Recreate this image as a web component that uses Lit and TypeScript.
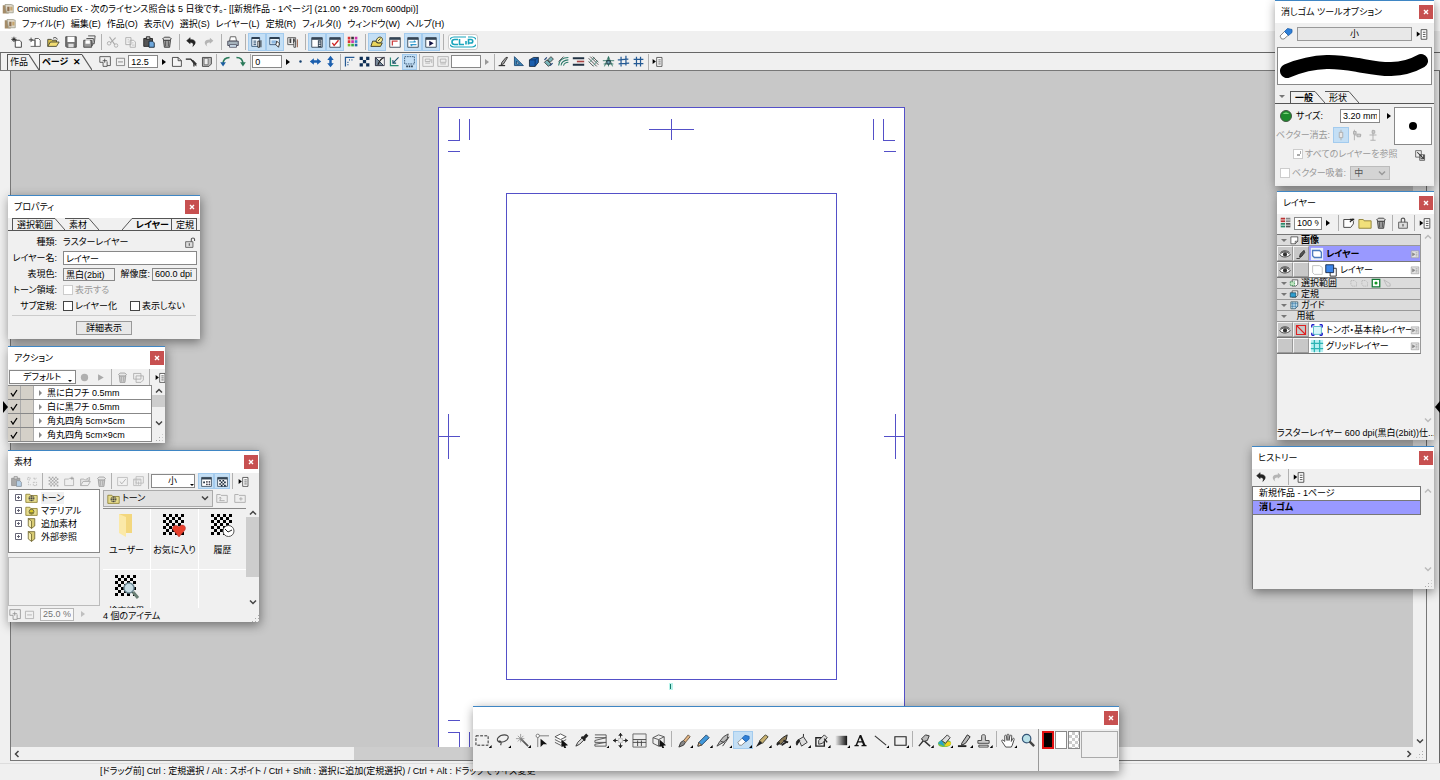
import { LitElement, html, css, svg } from "lit";
import { customElement, property } from "lit/decorators.js";
import { classMap } from "lit/directives/class-map.js";

/* Path data for an n x n checkerboard made of s-sized squares. */
const checker = (n: number, s: number, x0: number, y0: number) => {
  let d = "";
  for (let r = 0; r < n; r++)
    for (let c = 0; c < n; c++)
      if ((r + c) % 2 === 0) d += `M${x0 + c * s} ${y0 + r * s}h${s}v${s}h${-s}z`;
  return d;
};

const trash = svg`<path d="M4 6h8l-1 8H5z" fill="#aaa" stroke="#333"/><path d="M3 4.5 5 2.5h6l2 2-2 1.5H5z" fill="#ddd" stroke="#333"/><path d="M6.5 7v6M9.5 7v6" stroke="#444"/>`;
const undo = svg`<path d="M3 6.500 7 3v2c6 0 8 4 3 8 1.500-3 0-4.500-3-4.500V10z" fill="#222" stroke="#222" stroke-width=".6"/>`;
const redo = svg`<path d="M13 6.500 9 3v2c-6 0-8 4-3 8-1.500-3 0-4.500 3-4.500V10z" fill="#b5b5b5"/>`;
const flyout = svg`<path d="M2 5v6l4-3z" fill="#000"/><path d="M7 3h6.500v11H7zM9 6h3M9 8.500h3M9 11h3" fill="#fff" stroke="#444"/>`;
const grid16 = svg`<path d="M5.500 2v12M10.500 2v12M2 5.500h12M2 10.500h12" stroke="#245a94" stroke-width="1.500"/>`;
const eraser = svg`<path d="M2 10 6.500 5.500 10.500 9 6 13H3.500z" fill="#fff" stroke="#888"/><path d="M6.500 5.500 9.500 2.500 14 3.500v3L10.500 9.500z" fill="#2f80d8" stroke="#1c5da8" stroke-width=".8"/>`;
const zoomIn = svg`<path d="M1 2h13v11h-4M1 2v7h4v5h5V8M7 4.500v5M4.500 7H10" stroke="#444" fill="none"/>`;
const zoomOut = svg`<path d="M3 4h10v9H3zM5 8.500h6" stroke="#777" fill="none"/>`;
const folderTone = svg`<path d="M1 4h5l1 1.500h8V14H1z" fill="#e6dc8c" stroke="#8a7d30"/><circle cx="8" cy="9" r="3.500" fill="#444"/><path d="M6.500 6v6M9.500 6v6M5 7.500h6M5 10.500h6" stroke="#e6dc8c" stroke-width=".7"/>`;
const panelWin = svg`<path d="M2 3h12v11H2z" fill="#fff" stroke="#345"/><path d="M2 3h12v2.500H2z" fill="#345"/>`;

const ICONS: Record<string, unknown> = {
  app: svg`<path d="M1 3h8v11H1z" fill="#a58c68"/><path d="M4 2h8l3 1v10H6z" fill="#ded7c8" stroke="#998"/><path d="M7 5h3v6H7z" fill="#8f7050"/><path d="M11 5h3v5h-3z" fill="#c7a770"/>`,
  newWork: svg`<path d="M6 6h5l2 2v6H6z" fill="#fff" stroke="#333"/><path d="M4.500 2v6M1.500 5h6M2.500 3l4 4M6.500 3l-4 4" stroke="#222"/>`,
  newPage: svg`<path d="M4 6h4v7H3M8 4h4l2 2v7H8z" fill="#fff" stroke="#555"/><path d="M3.500 3v5M1 5.500h5" stroke="#333"/>`,
  open: svg`<path d="M2 13V5h4l1 1h5v2" fill="#d8c050" stroke="#443"/><path d="M2 13 5 8h10l-3 5z" fill="#f2dd74" stroke="#443"/><path d="M8 4c2-2 4-1 5 1" stroke="#222" fill="none"/>`,
  save: svg`<path d="M2 2h12v12H3l-1-1z" fill="#777" stroke="#444"/><path d="M4 2h8v6H4z" fill="#fff"/><path d="M5 10h6v4H5z" fill="#ddd"/>`,
  saveAll: svg`<path d="M7 1h8l-1 9h-4" fill="#eee" stroke="#444"/><path d="M5 4h8l-1 8H9" fill="#eee" stroke="#444"/><path d="M2 6h9v8H2z" fill="#999" stroke="#444"/><path d="M4 6h5v4H4z" fill="#fff"/>`,
  cut: svg`<path d="M4 2l6 9M11 3 5 9" stroke="#aaa" fill="none" stroke-width="1.300"/><circle cx="11.500" cy="12" r="2" fill="none" stroke="#aaa"/><circle cx="3.500" cy="9.500" r="2" fill="none" stroke="#aaa"/>`,
  copy: svg`<path d="M2 3h6v8H2zM7 6h4l2 2v6H7z" fill="#f4f4f4" stroke="#aaa"/><path d="M9 9h2M9 11.500h3M4 5.500h2M4 8h2" stroke="#bbb"/>`,
  paste: svg`<path d="M2 4h10v9H2z" fill="#555" stroke="#222"/><path d="M5 2h4v3H5z" fill="#bbb" stroke="#222"/><path d="M8 7h4l2 2v5H8z" fill="#6fa8dc" stroke="#123"/>`,
  trash,
  undo,
  redo,
  print: svg`<path d="M5 2h6l1 5H4z" fill="#fff" stroke="#555"/><path d="M2 7h12v5H2z" fill="#a7b4bd" stroke="#445"/><path d="M4 11h8v3H4z" fill="#d5e7f4" stroke="#556"/>`,
  ruleA: svg`<path d="M2 3h9v10H2z" fill="#e9f3fa" stroke="#357"/><path d="M2 3.500h9" stroke="#234" stroke-width="2"/><path d="M4 7h3M4 9h3M4 11h3" stroke="#246"/><path d="M9 7h2v7H9zM12.500 6v8" stroke="#222" fill="#fff"/>`,
  ruleB: svg`<path d="M2 3h11v8H2z" fill="#e9f3fa" stroke="#357"/><path d="M2 3.500h11" stroke="#234" stroke-width="2"/><path d="M4 7h6M4 9h5" stroke="#48c"/><path d="m10 7 3 3-1 4-3-3z" fill="#fff" stroke="#222"/>`,
  ruleC: svg`<path d="M2 3h9v8H2z" fill="#eee" stroke="#555"/><path d="M4 4h2v5H4zM8 4h2v5H8z" fill="#444"/><path d="M9 7h2v7H9z" stroke="#444" fill="#fff"/><path d="M13 5v9" stroke="#8a4a30"/>`,
  winProp: svg`${panelWin}<path d="M9 6h4v8H9z" fill="#345"/><path d="M10 8h2M10 10h2M10 12h2" stroke="#fff"/>`,
  winCheck: svg`${panelWin}<path d="m5 9 2 3 5-6" stroke="#c22" fill="none" stroke-width="1.500"/>`,
  palette: svg`<path d="M2 2h3v3H2zM2 6h3v3H2z" fill="#d33"/><path d="M6 2h3v3H6z" fill="#333"/><path d="M10 2h3v3h-3zM6 6h3v3H6z" fill="#c3a"/><path d="M10 6h3v3h-3z" fill="#38c"/><path d="M2 10h3v3H2z" fill="#7b3"/><path d="M6 10h3v3H6z" fill="#3a4"/><path d="M10 10h3v3h-3z" fill="#26a"/>`,
  material: svg`<path d="M1 13 3 7h4l1 2h6l-2 4z" fill="#ead65c" stroke="#332"/><path d="M7 8c0-6 6-7 7-4 1 2-1 5-4 5z" fill="#f7ea90" stroke="#332"/><path d="m9 7 3-3" stroke="#332"/>`,
  winHist: svg`${panelWin}<path d="M5 12V7h6" stroke="#c44" fill="none" stroke-width="1.500"/>`,
  winSwap: svg`${panelWin}<path d="M4 8h7M9 6.500 11 8M12 11H5M7 12.500 5 11" stroke="#39c" fill="none" stroke-width="1.300"/>`,
  winPlay: svg`${panelWin}<path d="M6 6.500v6l5-3z" fill="#114"/>`,
  zoomIn,
  zoomOut,
  page: svg`<path d="M3 3h7l4 4v7H3z" fill="#f4f4f4" stroke="#333"/><path d="M10 3v4h4" fill="none" stroke="#333"/>`,
  pageTurn: svg`<path d="M1 5h6l4 4v5" stroke="#222" fill="none" stroke-width="1.500"/><path d="M7 6h3l4 4v4l-4-4z" fill="#333"/>`,
  spread: svg`<path d="M3 3h11v8l-3 3H3z" fill="#bbb" stroke="#333"/><path d="M5 4h5v8H5z" fill="#eee" stroke="#666"/>`,
  rotL: svg`<path d="M13 3C8 3 5 6 5 11" stroke="#2a7a5a" fill="none" stroke-width="1.800"/><path d="M1.500 9h7L5 14z" fill="#1d5ea0"/>`,
  rotR: svg`<path d="M3 3c5 0 8 3 8 8" stroke="#2a7a5a" fill="none" stroke-width="1.800"/><path d="M7.500 9h7L11 14z" fill="#2a7a5a"/>`,
  dot: svg`<circle cx="8" cy="8" r="1.500" fill="#15406e"/>`,
  flipH: svg`<path d="M1 8l5-4v2.500h4V4l5 4-5 4V9.500H6V12z" fill="#1b5fae"/>`,
  flipV: svg`<path d="m8 1 4 5H9.500v4H12l-4 5-4-5h2.500V6H4z" fill="#1b5fae"/>`,
  rulerCorner: svg`<path d="M3 14V3h11" fill="none" stroke="#245a94" stroke-width="1.500"/><path d="M5 12h2M5 9h2M8 5v2M11 5v2" stroke="#245a94"/>`,
  checker: svg`<path d="${checker(3, 4, 2, 2)}" fill="#0f2f55"/>`,
  tri: svg`<path d="M3 3v10h10z" fill="#789" stroke="#123"/><path d="M14 3c-4 1-6 4-8 9" stroke="#222" fill="none" stroke-width="1.500"/><path d="M3 3h11v10H3z" stroke="#445" fill="none"/>`,
  snapAngle: svg`<path d="M3 3v10h10" stroke="#2b8d72" fill="none" stroke-width="1.500"/><path d="M13 3 6 10M6 6v4h4" stroke="#164f68" fill="none" stroke-width="1.300"/>`,
  marquee: svg`<path d="M2 2h12v9H2z" fill="none" stroke="#246" stroke-dasharray="2 1"/><path d="M4 14h9" stroke="#234" stroke-width="2" stroke-dasharray="2 1"/>`,
  boxA: svg`<path d="M1 2h13v12H1z" fill="none" stroke="#aaa"/><path d="M4 5h6v3H4zM4 10h6M12 5v5" fill="#eee" stroke="#aaa"/>`,
  boxB: svg`<path d="M1 2h13v12H1z" fill="none" stroke="#aaa"/><path d="M4 5h7v4H4zM4 11h7" fill="#eee" stroke="#aaa"/>`,
  rulePen: svg`<path d="M2 13h8" stroke="#333" stroke-width="1.500"/><path d="m13 3-5 8-3 1 1-3 5-6z" fill="#aaa" stroke="#222"/>`,
  setSquare: svg`<path d="M3 2v11h11zM5.500 7.500v3.500h3.500z" fill="#3f87b6" stroke="#15406e" fill-rule="evenodd"/>`,
  hexa: svg`<path d="M3 6 8 3h6v6l-4 5H3z" fill="#1b5fae" stroke="#123"/><path d="M3 6h7l4-3M10 6v8" stroke="#0c2f60" fill="none"/>`,
  markers: svg`<path d="m3 9 3-3 5 5-3 3zM7 6l4-4 3 3-4 4z" fill="#79b5b8" stroke="#333"/><path d="m3 6 3-3M10 13l3-3" stroke="#247" stroke-width="1.500"/>`,
  curves: svg`<path d="M2 13C2 7 7 3 14 3M5 13c0-4 4-7 9-7M8 13c1-3 3-4 6-4" stroke="#2b7a6a" fill="none" stroke-width="1.300"/><path d="M2 8l6-6" stroke="#333"/>`,
  layersH: svg`<path d="M1 4h14M1 12h14" stroke="#234" stroke-width="2.500"/><path d="M6 8h9" stroke="#a44" stroke-width="2"/>`,
  radial: svg`<path d="m2 4 10 10M4 2l10 10M7 2l7 7M2 8l6 6" stroke="#333"/><path d="m3 9 6-6M8 13l5-6" stroke="#4a9a88"/>`,
  persp: svg`<path d="M8 2 3 14M8 2l5 12M8 2v12M1 7h14M2 11h12" stroke="#246b5a" fill="none"/><path d="M6 7h4v4H6z" fill="#7ab" stroke="#123"/>`,
  gridSkew: svg`<path d="M5 2v12M11 1v12M1 6l13-1M2 11l13-1" stroke="#245a94" stroke-width="1.500"/>`,
  grid: grid16,
  flyout,
  record: svg`<circle cx="8" cy="8" r="4.500" fill="#b0b0b0"/>`,
  play: svg`<path d="M5 4v8l7-4z" fill="#aaa"/>`,
  dup: svg`<path d="M2 3h9v7H2zM5 6h9v5l-3 3H5z" fill="#eee" stroke="#555"/>`,
  lock: svg`<path d="M3 7h10v7H3z" fill="#ddd" stroke="#555"/><path d="M6 7V4c0-2 4-2 4 0v3M8 9v3" fill="none" stroke="#555" stroke-width="1.300"/>`,
  unlock: svg`<path d="M2 7h9v7H2z" fill="#ddd" stroke="#555"/><path d="M9 7V4c0-2 4-2 4 0v2M6.500 9v3" fill="none" stroke="#555" stroke-width="1.300"/>`,
  swapGrey: svg`<path d="M2 3h3v3H2zM9 9h4v4H9zM9 4h4M11 4v3M3 8v4h3" stroke="#777" fill="none" stroke-dasharray="2 1"/>`,
  toneGrid: svg`<path d="${checker(6, 2, 2, 2)}" fill="#555"/>`,
  newFolder: svg`<path d="M2 5h5l1-1h5v9H2z" fill="#eee" stroke="#666"/><path d="M11 2v4M9 4h4" stroke="#333"/>`,
  openFolder: svg`<path d="M2 13V5h4l1 1h5v2" fill="#ddd" stroke="#555"/><path d="M2 13 5 8h9l-3 5z" fill="#eee" stroke="#555"/><path d="m9 5 4-2v4" stroke="#555" fill="none"/>`,
  checkBox: svg`<path d="M2 3h12v10H2z" fill="#f6f6f6" stroke="#777"/><path d="m5 8 2 3 5-6" stroke="#555" fill="none"/>`,
  cascade: svg`<path d="M5 2h9v8H5zM2 5h9v8H2z" fill="#eee" stroke="#777"/><path d="M2 6h9M5 8v4M8 8v4" stroke="#777"/>`,
  viewList: svg`${panelWin}<path d="M4 8h2v2H4z" fill="#123"/><path d="M8 8h1v1H8zM11 8h1v1h-1zM8 11h1v1H8zM11 11h1v1h-1z" stroke="#223"/>`,
  viewTone: svg`${panelWin}<path d="${checker(4, 2, 4, 6)}" fill="#123"/>`,
  folderTone,
  folderMat: svg`<path d="M1 4h5l1 1.500h8V14H1z" fill="#e6dc8c" stroke="#8a7d30"/><circle cx="8" cy="9.500" r="3" fill="#d9c728" stroke="#554"/><path d="M6.500 10c1 1.500 2 1.500 3 0" stroke="#443" fill="none"/>`,
  folderSide: svg`<path d="M4 2h8v9l-4 3z" fill="#d9cc74" stroke="#6d6430"/><path d="m4 2 4 3v9l-4-3z" fill="#f5ecae" stroke="#6d6430"/>`,
  folderUp: svg`<path d="M2 4h4l1 1h7v8H2z" fill="#eee" stroke="#aaa"/><path d="M5 11h6M6 7v4M4.500 8.500 6 7l1.500 1.500" stroke="#aaa" fill="none"/>`,
  folderPlus: svg`<path d="M2 4h4l1 1h7v8H2z" fill="#eee" stroke="#aaa"/><path d="M9 7v4M7 9h4" stroke="#aaa"/>`,
  eraser,
  nodeA: svg`<path d="M8 2v12" stroke="#aaa"/><path d="M6 5h4v6H6z" fill="#e8e8e8" stroke="#aaa"/>`,
  nodeB: svg`<path d="M5 2v12M5 8h8" stroke="#aaa"/><path d="M4 4h3v3H4zM8 7h4v3H8z" fill="#ccc" stroke="#aaa"/>`,
  nodeC: svg`<path d="M8 2v12M4 8h8M5 14h6" stroke="#aaa"/><path d="M7 3h3v3H7z" fill="#ccc" stroke="#aaa"/>`,
  dupSmall: svg`<path d="M2 2h7v8H2zM7 7h6v7H7z" fill="#eee" stroke="#555"/><path d="m4 4 7 7M12 7.500V12H8" stroke="#333" fill="none" stroke-width="1.300"/>`,
  swatches: svg`<path d="M2 2h5v5H2z" fill="#b33"/><path d="M8 2h5v5H8z" fill="#888"/><path d="M2 8h5v5H2z" fill="#2a8a6a"/><path d="M8 8h5v5H8z" fill="#555"/><path d="M2 4.500h11M2 10.500h11" stroke="#eee"/>`,
  newLayer: svg`<path d="M2 4h9l2 2v3l-3 4H2z" fill="#fff" stroke="#333"/><path d="M9 4h5M9 7l4-4" stroke="#222" stroke-width="1.500"/>`,
  folderY: svg`<path d="M1 4h5l1 1.500h8V14H1z" fill="#f1e07a" stroke="#8a7d30"/>`,
  eye: svg`<path d="M1 9c3-5 10-5 14 0-4 4-11 4-14 0z" fill="#fff" stroke="#222"/><circle cx="8" cy="8.500" r="2.800" fill="#333"/><path d="M2 6c3-3 9-3 12 0" stroke="#222" fill="none"/>`,
  penCell: svg`<path d="M2 14h4l6-8" fill="none" stroke="#222"/><path d="m6 12 1-4 5-5 1 3-4 5z" fill="#555" stroke="#222"/>`,
  layerSel: svg`<path d="M1 1h14v14H1z" fill="#eaf0fb"/><path d="M3 4h8l2 2v6H5l-2-2z" fill="#fff" stroke="#4b7bbd" stroke-width="1.500"/>`,
  layerPlain: svg`<path d="M3 3h8l3 2v8H5l-2-2z" fill="#fff" stroke="#bbb"/>`,
  layerBlue: svg`<path d="M7 6h7v9H7z" fill="#fff" stroke="#222"/><path d="M2 2h9v9H2z" fill="#3c86ea" stroke="#124"/>`,
  toggle: svg`<path d="M2 3h12v11H2z" fill="#e4e4e4" stroke="#999"/><path d="M4 6l4 2.500L4 11zM9 6h3M9 8.500h3M9 11h3" stroke="#888" fill="#888"/>`,
  pageSm: svg`<path d="M3 3h11v7l-4 4H3z" fill="#fff" stroke="#222"/><path d="M14 10h-4v4" stroke="#222" fill="none"/>`,
  pageGreen: svg`<path d="M5 3h9v7l-3 3H5z" fill="#fff" stroke="#222"/><path d="M2 6h7v6H2z" fill="#bfe5bf" stroke="#173" stroke-dasharray="2 1"/>`,
  pageBlue: svg`<path d="M5 3h9v7l-3 3H5z" fill="#fff" stroke="#222"/><path d="M2 6h9v7H2z" fill="#2f9ed0" stroke="#134"/>`,
  pageGuide: svg`<path d="M3 3h11v7l-4 4H3z" fill="#d6eefa" stroke="#134"/><path d="M6 3v11M10 3v11M3 6h11M3 10h11" stroke="#269"/>`,
  trim: svg`<path d="M4 4h9v9H4z" fill="#d9f7fa" stroke="#4ab7c0"/><path d="M2 2h3M2 2v3M14 2v3M14 2h-3M2 14v-3M2 14h3M14 14h-3M14 14v-3" stroke="#22c" stroke-width="1.500"/>`,
  gridLayer: svg`<path d="M1 1h14v14H1z" fill="#b9f0f2"/><path d="M5 1v14M11 1v14M1 5h14M1 11h14" stroke="#2db4b4" stroke-width="1.500"/>`,
  noDraw: svg`<path d="M2 2h12v12H2zM2 2l12 12" fill="none" stroke="#d22" stroke-width="1.500"/>`,
  selDash: svg`<path d="M3 4h6l3 3v6H5l-2-3z" fill="none" stroke="#aaa" stroke-dasharray="2 1"/>`,
  selOn: svg`<path d="M2 2h12v12H2z" fill="#fff" stroke="#173" stroke-width="2"/><circle cx="8" cy="8" r="2.500" fill="#192"/>`,
  selCut: svg`<path d="m3 3 10 6v4H8z" fill="none" stroke="#aaa"/>`,
  tMarquee: svg`<path d="M1 3h13v10H1z" fill="none" stroke="#222" stroke-dasharray="3 1.500"/>`,
  tLasso: svg`<path d="M5 10C-1 7 5 2 10 2c6 0 5 5 0 7-3 1-6 1-6 0s4-1 2 4" fill="none" stroke="#444" stroke-width="1.200"/>`,
  tWand: svg`<path d="m6 6 8 8" stroke="#555" stroke-width="1.800"/><path d="M6 1v9M1 6h9M3 3l6 6M9 3 3 9" stroke="#888" stroke-width=".8"/>`,
  tRuler: svg`<path d="M4 15V3h12" fill="none" stroke="#777"/><circle cx="4" cy="3" r="1.800" fill="#fff" stroke="#777"/><path d="m7 6 7 6H10l-3 3z" fill="#111"/>`,
  tLayerMove: svg`<path d="m1 4 6-3 6 3-6 3zM1 7l6 3 6-3M1 10l6 3 3-1" fill="#fff" stroke="#555"/><path d="m8 7 7 6-3 .5 1 2.500-2 0-1-2-2 1z" fill="#111"/>`,
  tPicker: svg`<path d="m2 14 2-4 5-5 2 2-5 5z" fill="#ddd" stroke="#333"/><path d="m8 4 4 4M10 5l3-3 1 1-3 3z" stroke="#222" stroke-width="2"/>`,
  tPanel: svg`<path d="M2 2h12M2 5h12M2 8l12-3M2 8v2l12 0M2 12l12-2M2 12v2h12V2" fill="none" stroke="#555"/>`,
  tMove: svg`<path d="M8 0v5M8 11v5M0 8h5M11 8h5" stroke="#222"/><path d="M8 0 5.500 3h5zM8 16l-2.500-3h5zM0 8l3-2.500v5zM16 8l-3-2.500v5z" fill="#222"/><path d="M6 6h4v4H6z" fill="none" stroke="#888" stroke-dasharray="1 1"/>`,
  tFrame: svg`<path d="M1 1h14v14H1z" fill="#eee" stroke="#666"/><path d="M1 7h14M1 10h14M6 8v6M10 8v6" stroke="#444"/>`,
  tCube: svg`<path d="m1 5 6-3 6 2v7l-6 3-6-3zM1 5l6 2 6-3M7 7v7" fill="#eee" stroke="#555"/><path d="m8 7 7 6-3 .5 1 2.500-2 0-1-2-2 1z" fill="#111"/>`,
  tPen: svg`<path d="m2 15 2-5 3-2 2 2-2 3z" fill="#888" stroke="#333"/><path d="m7 8 5-6 2 2-5 6z" fill="#e1b381" stroke="#654"/>`,
  tPencil: svg`<path d="m2 14 1-4 8-8 3 3-8 8z" fill="#4199dc" stroke="#246"/><path d="m2 14 1-4 3 3z" fill="#edc99a" stroke="#543"/>`,
  tMarker: svg`<path d="m1 14 3-5 4-5 5-3-1 5-4 4z" fill="#bbb" stroke="#444"/><path d="m7 14 3-4 4-6M5 9l4 1" stroke="#333"/>`,
  tBrush: svg`<path d="m1 15 4-7 3 3z" fill="#222"/><path d="m5 8 6-6 3 2-6 7z" fill="#c8b06f" stroke="#443"/>`,
  tPattern: svg`<path d="M2 11 8 5l5-3-1 5-6 5z" fill="#8b7a55" stroke="#222"/><path d="m2 13 3-3M7 13l6-4M9 8l5 2" stroke="#222" stroke-width="1.800"/>`,
  tFill: svg`<path d="M4 7 9 4l4 6-6 4z" fill="#ddd" stroke="#333"/><path d="M9 4V1M4 7c-3 1-3 5-2 6l3-5z" fill="#222" stroke="#222"/>`,
  tShape: svg`<path d="M2 5h9v9H2z" fill="none" stroke="#222" stroke-width="1.500"/><path d="m5 8 6-6 3 3-5 6-4 1z" fill="#ddd" stroke="#333"/><path d="m11 6 3 4" stroke="#222" stroke-width="1.500"/>`,
  tGrad: svg`<defs><linearGradient id="gr"><stop offset="0" stop-color="#f5f5f5"/><stop offset="1" stop-color="#111"/></linearGradient></defs><path d="M1 3h13v10H1z" fill="url(#gr)"/>`,
  tText: svg`<path d="M7.200 2h1.600l4.300 10.500 1.400.5v1H9v-1l1.700-.5-1-2.500H5.400l-.9 2.500 1.700.5v1H1.500v-1l1.400-.5zM7.500 4.800 5.800 8.900h3.500z" fill="#111"/>`,
  tLine: svg`<path d="m2 3 12 10" stroke="#333" stroke-width="1.200"/>`,
  tRect: svg`<path d="M2 4h12v9H2z" fill="none" stroke="#222" stroke-width="1.200"/>`,
  tLineCorr: svg`<path d="m2 14 9-11M14 14 5 6" stroke="#333" stroke-width="1.500"/><path d="m9 2 4 1-2 5-4 1-2-3z" fill="#bbb" stroke="#333"/>`,
  tColor: svg`<path d="M1 11c1-5 13-5 14-1s-5 5-8 5-6-1-6-4z" fill="#7ac043"/><path d="M8 14c4 0 7-1 7-4l-4-1z" fill="#f2d21c"/><path d="M1 11l4-4 3 7z" fill="#27a5ca"/><path d="m5 8 6-6 3 3-5 6z" fill="#ddd" stroke="#333"/>`,
  tRuleLine: svg`<path d="M1 14h9" stroke="#222" stroke-width="2"/><path d="m5 11 6-9 3 2-5 7-4 2z" fill="#bbb" stroke="#222"/>`,
  tStamp: svg`<path d="M6 8V4c-1-3 5-3 4 0v4h4v3H2V8z" fill="#ccc" stroke="#444"/><path d="M3 13h10v2H3z" fill="#eee" stroke="#444"/>`,
  tHand: svg`<path d="M5 15 1 9c-1-2 1-2 3 0V3c0-1 2-1 2 1l.5 4V2c0-1 2-1 2 0v6l1-5c0-1 2-1 2 0L11 9l1.500-3c1-1 2 0 1.500 1l-2 6-1 2z" fill="#fff" stroke="#444"/>`,
  tLoupe: svg`<circle cx="6" cy="6" r="4.500" fill="#b9e0e8" stroke="#357" stroke-width="1.300"/><path d="m9 9 5 5" stroke="#444" stroke-width="2.500"/>`,
};

const icon = (name: string, size = 16) =>
  html`<svg width=${size} height=${size} viewBox="0 0 16 16" fill="none" aria-hidden="true">${ICONS[name]}</svg>`;

const SLANT_DOWN = html`<svg class="slant" width="10" height="12" viewBox="0 0 10 12" preserveAspectRatio="none"><path d="M0 .5 10 12" stroke="#555" fill="none" /></svg>`;
const SLANT_UP = html`<svg class="slant" width="10" height="12" viewBox="0 0 10 12" preserveAspectRatio="none"><path d="M0 12 10 .5" stroke="#555" fill="none" /></svg>`;

const chevron = (d: string) =>
  html`<svg width="8" height="8" viewBox="0 0 8 8"><path d=${d} fill="none" stroke="currentColor" stroke-width="1.500" /></svg>`;
const UP = "M1 5.500 4 2.500l3 3";
const DOWN = "M1 2.500 4 5.500l3-3";
const LEFT = "M5.500 1 2.500 4l3 3";
const RIGHT = "M2.500 1l3 3-3 3";

type Tool = string | { i: string; on?: boolean; off?: boolean };

/* A floating palette with a white caption strip and a red close button. */
@customElement("tool-window")
class ToolWindow extends LitElement {
  @property() heading = "";

  static styles = css`
    :host {
      position: absolute;
      display: flex;
      flex-direction: column;
      box-sizing: border-box;
      border-top: 1px solid #3f86c4;
      background: #f0f0f0;
      box-shadow: 1px 3px 10px rgba(0, 0, 0, 0.45);
      overflow: hidden;
    }
    header {
      display: flex;
      align-items: center;
      justify-content: space-between;
      flex: none;
      height: 22px;
      padding: 0 1px 0 6px;
      background: #fff;
    }
    h2 {
      margin: 0;
      font-size: 9px;
      font-weight: 400;
    }
    button {
      display: flex;
      align-items: center;
      justify-content: center;
      width: 14px;
      height: 14px;
      padding: 0;
      border: 0;
      background: #c75050;
    }
  `;

  render() {
    return html`<header>
        <h2>${this.heading}</h2>
        <button aria-label="閉じる">
          <svg width="6" height="6" viewBox="0 0 6 6"><path d="m1 1 4 4M5 1 1 5" stroke="#fff" stroke-width="1.400" /></svg>
        </button>
      </header>
      <slot></slot>`;
  }
}

@customElement("app-root")
class AppRoot extends LitElement {
  static styles = css`
    :host {
      display: flex;
      flex-direction: column;
      position: relative;
      height: 100vh;
      overflow: hidden;
      background: #f0f0f0;
      color: #000;
      font: 9px/12px "Liberation Sans", "Noto Sans CJK JP", sans-serif;
      font-feature-settings: "palt";
      white-space: nowrap;
    }
    * { box-sizing: border-box; }
    svg { display: block; flex: none; }
    button, input, select { margin: 0; font: inherit; font-feature-settings: inherit; color: inherit; }
    button { padding: 0; border: 0; background: none; display: flex; align-items: center; justify-content: center; }
    input, select { appearance: none; border: 1px solid #888; border-radius: 0; background: #fff; padding: 0 2px; min-width: 0; height: 14px; outline: 0; }
    input[type="checkbox"] { width: 10px; height: 10px; padding: 0; margin: 0 2px 0 0; border-color: #444; flex: none; }
    input[type="checkbox"]:disabled { border-color: #ccc; }
    input[type="checkbox"]:disabled:checked { background: linear-gradient(#aaa, #aaa) 6px 1px / 1px 3px no-repeat, linear-gradient(#aaa, #aaa) 3px 4px / 3px 2px no-repeat, #fff; }
    label { display: flex; align-items: center; }
    ul { list-style: none; margin: 0; padding: 0; }
    .row { display: flex; align-items: center; }
    .grow { flex: 1; min-width: 0; }
    .dim { color: #999; }

    .title { display: flex; align-items: center; gap: 3px; height: 17px; padding: 0 2px; background: #fff; margin: 0; font-size: 9px; font-weight: 400; }
    .menu { display: flex; align-items: center; gap: 6px; height: 14px; padding: 0 4px; background: #fff; }
    .menu a { color: inherit; text-decoration: none; }
    .bar { display: flex; align-items: center; height: 22px; padding: 0 8px; border-bottom: 1px solid #666; }
    .tool { width: 18px; height: 18px; flex: none; }
    .on { background: #c4dff5; box-shadow: inset 0 0 0 1px #a3cbee; }
    .off { opacity: 0.45; }
    .sep { flex: none; width: 6px; height: 16px; display: flex; justify-content: center; }
    .sep::before { content: ""; width: 1px; background: #b0b0b0; }
    .clip { height: 16px; padding: 0 1px; margin-left: 2px; background: #fff; border: 1px solid #ccc; border-radius: 3px; }

    .docbar { display: flex; align-items: center; height: 18px; padding: 0 6px; border-bottom: 1px solid #777; border-left: 1px solid #777; }
    .docbar .tool { width: 15px; height: 16px; }
    .docbar .sep { width: 4px; }
    .docbar .arrow { width: 11px; }
    .tabs { display: flex; align-items: flex-end; border-bottom: 1px solid #555; height: 13px; flex: none; }
    .tab { height: 12px; padding: 0 2px 0 4px; border-top: 1px solid #555; border-left: 1px solid #555; }
    .tab.sel { font-weight: 700; }
    .tab.end { border-right: 1px solid #555; }
    .tab.flat { border-left: 0; }
    .docbar .tabs { height: 16px; border-bottom: 0; margin-right: 6px; }
    .docbar .tab { height: 16px; gap: 5px; padding: 0 1px 0 2px; }
    .docbar .slant { height: 16px; }
    .zoom { width: 30px; height: 13px; }
    .arrow { width: 10px; height: 14px; }

    .work { display: flex; flex: 1; min-height: 0; padding: 0 12px 2px 10px; border-right: 1px solid #666; }
    .doc { flex: 1; min-width: 0; display: flex; flex-direction: column; border-right: 1px solid #777; border-bottom: 1px solid #777; border-left: 1px solid #777; }
    .view { flex: 1; min-height: 0; display: flex; }
    .canvas { position: relative; flex: 1; overflow: hidden; background: #c8c8c8; }
    .sheet { position: absolute; left: 427px; top: 36px; }
    .vs { display: flex; flex-direction: column; align-items: center; justify-content: space-between; flex: none; width: 13px; padding: 2px 0; color: #444; }
    .vs.faint { color: #bbb; }
    .vs .grip { margin-top: 6px; }
    .hs { display: flex; align-items: center; height: 13px; flex: none; padding: 0 3px 0 2px; color: #444; gap: 2px; }
    .track { flex: 1; align-self: stretch; display: flex; }
    .track i { background: #cdcdcd; margin-left: 24%; width: 45%; }
    .vthumb { flex: none; width: 100%; background: #cdcdcd; }
    .status { height: 17px; flex: none; padding: 1px 0 0 100px; border-top: 1px solid #ddd; }
    .edge { position: absolute; top: 401px; }
    .edge.l { left: 3px; }
    .edge.r { right: 0; }

    .w-prop { left: 8px; top: 195px; width: 192px; height: 144px; }
    .w-act { left: 8px; top: 346px; width: 157px; height: 97px; }
    .w-mat { left: 8px; top: 450px; width: 251px; height: 172px; }
    .w-opt { right: 6px; top: 0; width: 159px; height: 186px; }
    .w-layer { right: 6px; top: 191px; width: 157px; height: 249px; }
    .w-hist { right: 6px; top: 446px; width: 182px; height: 143px; }
    .w-tools { left: 473px; top: 706px; width: 646px; height: 65px; }

    .w-prop .tabs { padding: 0 3px 0 4px; }
    .props { display: grid; grid-template-columns: 46px minmax(0, 1fr); grid-auto-rows: 16px; column-gap: 6px; align-items: center; padding: 3px 3px 0; }
    .props > :nth-child(odd) { justify-content: flex-end; text-align: right; }
    .val { background: #f0f0f0; height: 13px; width: 52px; }
    .val.res { width: 45px; }
    .caption { flex: 1; justify-content: flex-end; padding-right: 2px; }
    .foot { display: flex; justify-content: center; margin: 1px 4px; padding-top: 5px; border-top: 1px solid #ccc; }
    .push { border: 1px solid #999; background: #e8e8e8; height: 14px; padding: 0 9px; }

    .pbar { display: flex; align-items: center; height: 16px; flex: none; padding: 0 1px; }
    .pbar .tool { height: 16px; width: 16px; }
    .combo { height: 14px; padding: 0 13px; }
    .combo.small { padding: 0 16px; margin-right: 3px; }
    .cwrap { position: relative; display: flex; }
    .cwrap::after { content: ""; position: absolute; right: 4px; bottom: 2px; border: 2px solid transparent; border-top-color: #000; border-bottom: 0; }
    .body { display: flex; flex: 1; min-height: 0; }
    .list { flex: 1; min-width: 0; overflow: hidden; }
    .w-act .list { border-top: 1px solid #888; }
    .act { display: flex; align-items: center; height: 14px; border-bottom: 1px solid #888; border-right: 1px solid #888; background: #fff; gap: 4px; }
    .act .cell { width: 13px; height: 13px; margin: 0; border: 0; border-right: 1px solid #aaa; background: #d4d0c8; }
    .cells { display: flex; }
    .cell { display: flex; align-items: center; justify-content: center; }
    .grip { display: block; flex: none; width: 8px; height: 8px; background: radial-gradient(circle, #aaa 30%, transparent 40%) 0 0 / 3px 3px; clip-path: polygon(100% 0, 100% 100%, 0 100%); }

    .w-mat .pbar { padding: 0; }
    .w-mat .pbar .sep { width: 5px; }
    .mleft { width: 92px; display: flex; flex-direction: column; }
    .tree { height: 64px; padding: 1px 6px; background: #fff; border: 1px solid #888; }
    .tree li { display: flex; align-items: center; gap: 3px; height: 13px; }
    .hi { background: #f0f0f0; }
    .blank { flex: 1; margin-top: 4px; border: 1px solid #bbb; }
    .zbar { display: flex; align-items: center; gap: 1px; height: 16px; padding: 0 1px; opacity: 0.55; }
    .zbar .zoom { width: 34px; margin: 0 3px; }
    .mright { flex: 1; min-width: 0; display: flex; flex-direction: column; margin-left: 3px; }
    .mdrop { display: flex; align-items: center; gap: 2px; width: 110px; height: 17px; padding: 0 3px; border: 1px solid #aaa; background: #e1e1e1; color: #444; }
    .mdrop select { flex: 1; border: 0; background: none; padding: 0; color: #000; }
    .cards { flex: 1; display: grid; grid-template-columns: repeat(3, 1fr); grid-auto-rows: 60px; overflow: hidden; gap: 1px; background: #fff; border-top: 1px solid #888; margin-top: 1px; }
    .card { display: flex; flex-direction: column; align-items: center; justify-content: flex-start; gap: 4px; padding-top: 3px; background: #f0f0f0; }
    .mfoot { display: flex; align-items: flex-end; justify-content: space-between; height: 14px; }

    .opt { display: flex; align-items: center; gap: 3px; height: 22px; padding: 0 5px 0 3px; }
    .opt .push { flex: 1; }
    .stroke { border: 1px solid #888; background: #fff; margin: 2px 2px 0; height: 38px; width: 155px; }
    .w-opt .tabs { margin-top: 6px; }
    .w-opt .tabs .arrow { margin: 0 3px 0 2px; }
    .w-opt .tool { width: 16px; height: 16px; }
    .ogrid { display: flex; align-items: flex-start; padding: 2px 2px 0 0; }
    .orow { display: flex; align-items: center; gap: 4px; height: 19px; padding-left: 5px; }
    .size { width: 40px; }
    .orow.tight { gap: 0; padding-left: 1px; }
    .orow.tight .tool:first-of-type { margin-left: 3px; }
    .orow.deep { padding-left: 18px; }
    .oside { display: flex; flex-direction: column; align-items: flex-end; gap: 4px; padding: 1px 0 0; }
    .oside > svg { margin-right: 5px; }
    .brush { border: 1px solid #888; background: #fff; width: 38px; height: 38px; display: grid; place-items: center; }
    .snap { display: flex; align-items: center; width: 40px; height: 14px; padding: 0 3px; background: #d4d4d4; border: 1px solid #bbb; }
    .snap select { flex: 1; border: 0; background: none; padding: 0; color: #555; opacity: 1; }

    .lh { display: flex; align-items: center; gap: 2px; height: 11px; padding-left: 4px; border-bottom: 1px solid #999; border-right: 1px solid #999; background: #dcdcdc; line-height: 10px; }
    .states { display: flex; gap: 1px; padding-left: 10px; }
    .lr { display: flex; align-items: center; height: 16px; border-bottom: 1px solid #777; border-right: 1px solid #999; background: #fff; }
    .lr.sel { background: #9999ff; font-weight: 700; }
    .lr .cell { width: 16px; height: 15px; background: #c8c8c8; border: 1px solid #f4f4f4; border-right-color: #999; border-bottom-color: #999; }
    .lr .kind { display: flex; padding: 0 2px 0 1px; }
    .w-layer .list { margin-top: 3px; border-top: 1px solid #777; }
    .w-layer .pbar { margin-top: 1px; }
    .w-layer .pbar .arrow { width: 15px; }
    .lfoot { display: flex; align-items: center; justify-content: space-between; height: 14px; }

    .hist { flex: 1; border-left: 1px solid #777; margin-top: 1px; }
    .hist li { height: 14px; padding-left: 6px; background: #fff; border: 1px solid #777; border-left: 0; border-bottom: 0; }
    .hist li.sel { background: #9999ff; font-weight: 700; border-bottom: 1px solid #777; height: 15px; }

    .strip { display: flex; align-items: flex-start; flex: 1; }
    .icons { display: flex; flex: 1; padding-top: 2px; }
    .icons .tool { position: relative; flex: 1; width: auto; }
    .icons .more::after { content: ""; position: absolute; right: 1px; bottom: 1px; width: 3px; height: 3px; background: #000; clip-path: polygon(100% 0, 100% 100%, 0 100%); }
    .icons .sep { width: 5px; }
    .ink { display: flex; align-items: flex-start; gap: 1px; align-self: stretch; width: 81px; padding: 2px 1px 0 3px; border-left: 1px solid #999; }
    .sw { width: 12px; height: 18px; border: 1px solid #888; background: #fff; }
    .sw.black { background: #000; border: 2px solid #e01010; }
    .sw.clear { background: repeating-conic-gradient(#ccc 0 25%, #fff 0 50%) 0 0 / 6px 6px; }
    .well { flex: 1; height: 27px; border: 1px solid #aaa; }
  `;

  private tools(items: Tool[], size = 16) {
    return items.map((t) => {
      if (t === "|") return html`<span class="sep"></span>`;
      const o = typeof t === "string" ? { i: t } : t;
      return html`<button class=${classMap({ tool: true, on: !!(o as any).on, off: !!(o as any).off })} aria-label=${o.i}>${icon(o.i, size)}</button>`;
    });
  }

  private arrow(dim = false) {
    return html`<button class="arrow" aria-label="次"><svg width="6" height="8" viewBox="0 0 6 8"><path d="M1 1v6l4-3z" fill=${dim ? "#999" : "#000"} /></svg></button>`;
  }

  private scroll(faint = false, thumb = 0, grip = false) {
    return html`<div class=${classMap({ vs: true, faint })}>
      ${chevron(UP)}${thumb ? html`<span class="vthumb" style="height:${thumb}px"></span>` : ""}<span class="grow"></span>${chevron(DOWN)}${grip ? html`<span class="grip"></span>` : ""}
    </div>`;
  }

  private tri(color = "#777") {
    return html`<svg width="6" height="5" viewBox="0 0 6 5"><path d="M0 1h6L3 4z" fill=${color} /></svg>`;
  }

  private header() {
    const menus = ["ファイル(F)", "編集(E)", "作品(O)", "表示(V)", "選択(S)", "レイヤー(L)", "定規(R)", "フィルタ(I)", "ウィンドウ(W)", "ヘルプ(H)"];
    return html`
      <h1 class="title">${icon("app", 12)}ComicStudio EX - 次のライセンス照合は 5 日後です。- [[新規作品 - 1ページ] (21.00 * 29.70cm 600dpi)]</h1>
      <nav class="menu">${icon("app", 12)}${menus.map((m) => html`<a href="#">${m}</a>`)}</nav>
      <div class="bar">
        ${this.tools(["newWork", "newPage", "open", "save", "saveAll", "|", "cut", "copy", "paste", "trash", "|", "undo", "redo", "|", "print", "|",
          { i: "ruleA", on: true }, { i: "ruleB", on: true }, "ruleC", "|", { i: "winProp", on: true }, { i: "winCheck", on: true }, "palette", "|",
          { i: "material", on: true }, "winHist", { i: "winSwap", on: true }, { i: "winPlay", on: true }, "|"], 14)}
        <button class="clip" aria-label="CLIP">
          <svg width="26" height="12" viewBox="0 0 26 12" fill="none" stroke="#19a5bd" stroke-width="1.600">
            <path d="M8 3.500H4.500a2.500 2.500 0 0 0 0 5H8M9.500 3v5.500H14M16 5v3.500M18.500 8.500V3.500H21a1.700 1.700 0 0 1 0 3.500h-2" />
            <path d="M16 1H4a5 5 0 0 0 0 10h18a5 5 0 0 0 0-10h-4" stroke-width="1.200" />
          </svg>
        </button>
      </div>
      <div class="docbar">
        <div class="tabs" role="tablist">
          <button class="tab" role="tab">作品</button>${SLANT_DOWN}
          <button class="tab sel" role="tab"><span>ページ</span><span>✕</span></button>${SLANT_DOWN}
        </div>
        ${this.tools(["zoomIn", "zoomOut"], 13)}
        <input class="zoom" aria-label="表示倍率" value="12.5" />${this.arrow()}
        ${this.tools(["page", "pageTurn", "spread", "|", "rotL", "rotR", "|"], 13)}
        <input class="zoom" aria-label="回転角度" value="0" />${this.arrow()}
        ${this.tools(["dot", "flipH", "flipV", "|", "rulerCorner", "checker", "tri", "snapAngle", { i: "marquee", on: true }, "|", "boxA", "boxB"], 13)}
        <input class="zoom" aria-label="ページ番号" disabled />${this.arrow(true)}
        ${this.tools(["|", "rulePen", "setSquare", "hexa", "markers", "curves", "layersH", "radial", "persp", "gridSkew", "grid", "|", "flyout"], 13)}
      </div>`;
  }

  private workspace() {
    return html`<main class="work">
      <div class="doc">
        <div class="view">
          <div class="canvas">
            <svg class="sheet" width="467" height="641" viewBox="0 0 467 641" fill="none" stroke="#5450c8" shape-rendering="crispEdges">
              <path d="M.5 700V.5h466V700z" fill="#fff" />
              <path d="M68.500 86.500h330v486h-330z" />
              <path d="M21.500 12v21.500H10M31.500 12v21M10 44.500h12M445.500 12v21.500H457M435.500 12v21M446 44.500h12" />
              <path d="M211 22.500h45M233.500 12v21M0 329.500h22M10.500 307v45M446 329.500h23M457.500 307v45" />
              <path d="M10 613.500h12M446 613.500h12M10 625.500h11.500V641M31.500 625v16M457 625.500h-11.500V641M435.500 625v16" />
              <path d="M231 576h4v7h-4z" fill="#b9f4ec" stroke="none" /><path d="M232.500 577v5" stroke="#147a6a" />
            </svg>
          </div>
          ${this.scroll()}
        </div>
        <div class="hs">${chevron(LEFT)}<div class="track"><i></i></div>${chevron(RIGHT)}<span class="grip"></span></div>
      </div>
    </main>
    <footer class="status">[ドラッグ前] Ctrl : 定規選択 / Alt : スポイト / Ctrl + Shift : 選択に追加(定規選択) / Ctrl + Alt : ドラッグでサイズ変更</footer>
    <svg class="edge l" width="5" height="12" viewBox="0 0 5 12"><path d="M0 0v12l5-6z" fill="#000" /></svg>
    <svg class="edge r" width="5" height="12" viewBox="0 0 5 12"><path d="M5 0v12L0 6z" fill="#000" /></svg>`;
  }

  private properties() {
    return html`<tool-window class="w-prop" heading="プロパティ">
      <div class="tabs" role="tablist">
        <button class="tab" role="tab">選択範囲</button>${SLANT_DOWN}
        <button class="tab flat" role="tab">素材</button>${SLANT_DOWN}
        <span class="grow"></span>
        ${SLANT_UP}<button class="tab sel flat" role="tab">レイヤー</button>
        <button class="tab end" role="tab">定規</button>
      </div>
      <div class="props">
        <span>種類:</span><span class="row"><span class="grow">ラスターレイヤー</span>${icon("unlock", 13)}</span>
        <label for="lname">レイヤー名:</label><input id="lname" value="レイヤー" />
        <label for="lcolor">表現色:</label>
        <span class="row"><input id="lcolor" class="val" readonly value="黒白(2bit)" /><label class="caption" for="lres">解像度:</label><input id="lres" class="val res" readonly value="600.0 dpi" /></span>
        <span>トーン領域:</span><label class="dim"><input type="checkbox" disabled />表示する</label>
        <span>サブ定規:</span><span class="row"><label class="grow"><input type="checkbox" />レイヤー化</label><label class="grow"><input type="checkbox" />表示しない</label></span>
      </div>
      <div class="foot"><button class="push">詳細表示</button></div>
    </tool-window>`;
  }

  private actions() {
    const rows = ["黒に白フチ 0.5mm", "白に黒フチ 0.5mm", "角丸四角 5cm×5cm", "角丸四角 5cm×9cm"];
    return html`<tool-window class="w-act" heading="アクション">
      <div class="pbar">
        <span class="cwrap"><select class="combo" aria-label="アクションセット"><option>デフォルト</option></select></span>
        ${this.tools(["record", "play", "|", { i: "trash", off: true }, { i: "dup", off: true }, "|", "flyout"], 13)}
      </div>
      <div class="body">
        <ul class="list">
          ${rows.map((r) => html`<li class="act">
            <span class="cells"><button class="cell" aria-label="有効"><svg width="8" height="8" viewBox="0 0 8 8"><path d="m1 4 2 3 4-6" stroke="#000" stroke-width="1.300" fill="none" /></svg></button><span class="cell"></span></span>
            <svg width="5" height="8" viewBox="0 0 5 8"><path d="M1 1v6l3-3z" fill="#888" /></svg><span>${r}</span>
          </li>`)}
        </ul>
        ${this.scroll(false, 12, true)}
      </div>
    </tool-window>`;
  }

  private materials() {
    const tree = [["folderTone", "トーン"], ["folderMat", "マテリアル"], ["folderSide", "追加素材"], ["folderSide", "外部参照"]];
    const board = checker(7, 3, 1, 2);
    const cards = [
      { t: "ユーザー", g: svg`<path d="M5 2h13v19H5z" fill="#f3d77e"/><path d="m5 2 7 3v20l-7-4z" fill="#fbe9a8"/>` },
      { t: "お気に入り", g: svg`<path d=${board} fill="#000"/><path d="M17 25 11 18c-2-4 3-6 6-3 3-4 8-1 6 3z" fill="#e8402c" stroke="#a33" stroke-width=".5"/>` },
      { t: "履歴", g: svg`<path d=${board} fill="#000"/><circle cx="18.500" cy="19" r="5.500" fill="#fff" stroke="#555"/><path d="m15 17 3 3 4-2" fill="none" stroke="#222"/>` },
      { t: "検索結果", g: svg`<path d=${board} fill="#000"/><circle cx="15" cy="15" r="5" fill="#c5dbe3" stroke="#6b8792" stroke-width="1.500"/><path d="m19 19 5 6" stroke="#6b8076" stroke-width="3"/>` },
    ];
    return html`<tool-window class="w-mat" heading="素材">
      <div class="pbar">
        ${this.tools([{ i: "paste", off: true }, { i: "swapGrey", off: true }, "|", { i: "toneGrid", off: true }, { i: "newFolder", off: true }, { i: "openFolder", off: true }, { i: "trash", off: true }, "|", { i: "checkBox", off: true }, { i: "cascade", off: true }, "|"], 13)}
        <span class="cwrap"><select class="combo small" aria-label="表示サイズ"><option>小</option></select></span>
        ${this.tools([{ i: "viewList", on: true }, { i: "viewTone", on: true }, "|", "flyout"], 13)}
      </div>
      <div class="body">
        <div class="mleft">
          <ul class="tree">
            ${tree.map(([i, t], n) => html`<li>
              <svg width="7" height="7" viewBox="0 0 7 7" fill="#fff" stroke="#667"><path d="M.5.5h6v6h-6zM2 3.500h3M3.500 2v3" /></svg>${icon(i, 13)}<span class=${n ? "" : "hi"}>${t}</span>
            </li>`)}
          </ul>
          <div class="blank"></div>
          <div class="zbar">${icon("zoomIn", 13)}${icon("zoomOut", 13)}<input class="zoom" aria-label="プレビュー倍率" disabled value="25.0 %" />${this.arrow(true)}</div>
        </div>
        <div class="mright">
          <div class="row"><span class="mdrop">${icon("folderTone", 13)}<select aria-label="フォルダ"><option>トーン</option></select>${chevron(DOWN)}</span>${this.tools(["folderUp", "folderPlus"], 14)}</div>
          <div class="body">
            <div class="cards">${cards.map((c) => html`<button class="card"><svg width="26" height="28" viewBox="0 0 26 28" fill="none">${c.g}</svg>${c.t}</button>`)}<span class="card"></span><span class="card"></span></div>
            ${this.scroll(false, 60)}
          </div>
          <div class="mfoot"><span>4 個のアイテム</span><span class="grip"></span></div>
        </div>
      </div>
    </tool-window>`;
  }

  private toolOptions() {
    return html`<tool-window class="w-opt" heading="消しゴム ツールオプション">
      <div class="opt">${icon("eraser")}<button class="push">小</button>${icon("flyout", 14)}</div>
      <svg class="stroke" viewBox="0 0 153 36" preserveAspectRatio="none"><path d="M9 23C40 10 62 14 80 17S120 26 143 13" fill="none" stroke="#000" stroke-width="14" stroke-linecap="round" /></svg>
      <div class="tabs" role="tablist">
        <button class="arrow" aria-label="折りたたむ">${this.tri()}</button>
        <button class="tab sel" role="tab">一般</button>${SLANT_DOWN}<button class="tab flat" role="tab">形状</button>${SLANT_DOWN}
      </div>
      <div class="ogrid">
        <div class="grow">
          <div class="orow"><svg width="12" height="12" viewBox="0 0 12 12"><circle cx="6" cy="6" r="5.500" fill="#1c8a2c" stroke="#454" /><path d="M3 4c1-2 5-2 6 0z" fill="#7cd67c" /></svg><label class="grow" for="osize">サイズ:</label><input id="osize" class="size" value="3.20 mm" />${this.arrow()}</div>
          <div class="orow tight dim"><span>ベクター消去:</span>${this.tools([{ i: "nodeA", on: true }, "nodeB", "nodeC"], 14)}</div>
          <div class="orow deep dim"><label><input type="checkbox" checked disabled />すべてのレイヤーを参照</label></div>
          <div class="orow dim"><label><input type="checkbox" disabled />ベクター吸着:</label><span class="snap"><select aria-label="吸着の強さ" disabled><option>中</option></select>${chevron(DOWN)}</span></div>
        </div>
        <div class="oside"><div class="brush"><svg width="8" height="8" viewBox="0 0 8 8"><circle cx="4" cy="4" r="4" fill="#000" /></svg></div>${icon("dupSmall", 13)}</div>
      </div>
    </tool-window>`;
  }

  private layers() {
    const head = (i: string, t: string, bold = false) =>
      html`<div class="lh">${this.tri()}${i ? icon(i, 10) : html`&nbsp;&nbsp;&nbsp;`}${bold ? html`<b>${t}</b>` : t}${t === "選択範囲" ? html`<span class="states">${["selDash", "selDash", "selOn", "selCut"].map((s) => icon(s, 10))}</span>` : ""}</div>`;
    const row = (a: string, b: string, kinds: string[], t: string, sel = false) =>
      html`<div class=${classMap({ lr: true, sel })}>
        <button class="cell" aria-label="表示">${a ? icon(a, 12) : ""}</button><button class="cell" aria-label="編集対象">${b ? icon(b, 12) : ""}</button>
        <span class="kind">${kinds.map((k) => icon(k, 14))}</span><span class="grow">${t}</span>${icon("toggle", 10)}
      </div>`;
    return html`<tool-window class="w-layer" heading="レイヤー">
      <div class="pbar">
        ${this.tools(["swatches"], 14)}<input class="zoom" aria-label="不透明度" value="100 %" />${this.arrow()}
        ${this.tools(["|", "newLayer", "folderY", "trash", "|", "lock", "|", "flyout"], 14)}
      </div>
      <div class="body">
        <div class="list">
          ${head("pageSm", "画像", true)}
          ${row("eye", "penCell", ["layerSel"], "レイヤー", true)}
          ${row("eye", "", ["layerPlain", "layerBlue"], "レイヤー")}
          ${head("pageGreen", "選択範囲")}${head("pageBlue", "定規")}${head("pageGuide", "ガイド")}${head("", "用紙")}
          ${row("eye", "noDraw", ["trim"], "トンボ・基本枠レイヤー")}
          ${row("", "", ["gridLayer"], "グリッドレイヤー")}
        </div>
        ${this.scroll(true)}
      </div>
      <div class="lfoot"><span>ラスターレイヤー 600 dpi(黒白(2bit))仕...</span><span class="grip"></span></div>
    </tool-window>`;
  }

  private history() {
    return html`<tool-window class="w-hist" heading="ヒストリー">
      <div class="pbar">${this.tools(["undo", "redo", "|", "flyout"], 14)}</div>
      <div class="body"><ul class="hist"><li>新規作品 - 1ページ</li><li class="sel">消しゴム</li></ul>${this.scroll(true, 0, true)}</div>
    </tool-window>`;
  }

  private toolbox() {
    const items = ["tMarquee+", "tLasso+", "tWand+", "tRuler", "tLayerMove", "tPicker", "tPanel+", "tMove", "tFrame", "tCube", "|",
      "tPen+", "tPencil+", "tMarker+", "eraser+", "tBrush+", "tPattern+", "tFill+", "tShape+", "tGrad+", "tText", "tLine+", "tRect+", "|",
      "tLineCorr+", "tColor+", "tRuleLine+", "tStamp+", "|", "tHand+", "tLoupe"];
    return html`<tool-window class="w-tools">
      <div class="strip">
        <div class="icons">
          ${items.map((n) => {
            if (n === "|") return html`<span class="sep"></span>`;
            const name = n.replace("+", "");
            return html`<button class=${classMap({ tool: true, more: n.endsWith("+"), on: name === "eraser" })} aria-label=${name}>${icon(name, 15)}</button>`;
          })}
        </div>
        <div class="ink"><button class="sw black" aria-label="黒"></button><button class="sw" aria-label="白"></button><button class="sw clear" aria-label="透明"></button><div class="well"></div></div>
      </div>
    </tool-window>`;
  }

  render() {
    return html`${this.header()}${this.workspace()}${this.properties()}${this.actions()}${this.materials()}${this.toolOptions()}${this.layers()}${this.history()}${this.toolbox()}`;
  }
}
